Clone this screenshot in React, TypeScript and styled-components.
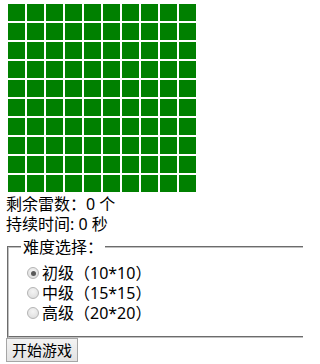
import React from "react";
import styled, { createGlobalStyle } from "styled-components";

const Global = createGlobalStyle`
  html, body { margin: 0; padding: 0; overflow: hidden; background: #fff; }
  body {
    font-family: "Noto Sans", "Noto Sans CJK SC", sans-serif;
    font-size: 16px;
    color: #000;
  }
`;

const Page = styled.div`
  box-sizing: border-box;
  padding: 2px 0 0 6px;
  width: 303px;
  height: 364px;
  overflow: hidden;
`;

const Board = styled.div<{ $cols: number }>`
  display: inline-grid;
  grid-template-columns: repeat(${(p) => p.$cols}, 17px);
  grid-auto-rows: 17px;
  gap: 2px;
  padding: 2px;
  vertical-align: top;
`;

const Cell = styled.div`
  background: #008000;
`;

const InfoLine = styled.div`
  line-height: 20px;
  height: 20px;
  white-space: nowrap;
`;

const Fieldset = styled.fieldset`
  margin: 3px 0 0 1px;
  padding: 0 12px 13px 12px;
  border: 2px groove rgb(192, 192, 192);
  width: 320px;
  min-width: 320px;
  box-sizing: border-box;
`;

const Legend = styled.legend`
  padding: 0 2px;
  line-height: 20px;
`;

const Options = styled.div`
  padding-top: 6px;
  display: flex;
  flex-direction: column;
`;

const OptionRow = styled.label`
  display: flex;
  align-items: center;
  height: 20px;
  line-height: 20px;
  white-space: nowrap;
`;

const Radio = styled.span<{ $checked?: boolean }>`
  box-sizing: border-box;
  width: 12px;
  height: 12px;
  margin: 0 3px 0 6px;
  border-radius: 50%;
  border: 1px solid #b4b4b4;
  background: radial-gradient(circle at 50% 35%, #f4f4f4 0%, #e2e2e2 70%, #d6d6d6 100%);
  display: flex;
  align-items: center;
  justify-content: center;
  &::after {
    content: "";
    display: ${(p) => (p.$checked ? "block" : "none")};
    width: 5px;
    height: 5px;
    border-radius: 50%;
    background: #5a5a5a;
  }
`;

const StartButton = styled.button`
  display: block;
  margin: 0;
  height: 24px;
  padding: 0 5px;
  font-family: "Noto Sans", "Noto Sans CJK SC", sans-serif;
  font-size: 15px;
  line-height: 20px;
  color: #000;
  border: 1px solid #a6a6a6;
  border-radius: 0;
  background: linear-gradient(#f3f3f3, #e3e3e3);
`;

const levels = [
  { label: "初级（10*10）", checked: true },
  { label: "中级（15*15）", checked: false },
  { label: "高级（20*20）", checked: false },
];

export default function App() {
  const cells = Array.from({ length: 100 }, (_, i) => i);
  return (
    <>
      <Global />
      <Page>
        <Board $cols={10}>
          {cells.map((i) => (
            <Cell key={i} />
          ))}
        </Board>
        <InfoLine>剩余雷数：0 个</InfoLine>
        <InfoLine>持续时间: 0 秒</InfoLine>
        <Fieldset>
          <Legend>难度选择：</Legend>
          <Options>
            {levels.map((l) => (
              <OptionRow key={l.label}>
                <Radio $checked={l.checked} />
                {l.label}
              </OptionRow>
            ))}
          </Options>
        </Fieldset>
        <StartButton>开始游戏</StartButton>
      </Page>
    </>
  );
}
